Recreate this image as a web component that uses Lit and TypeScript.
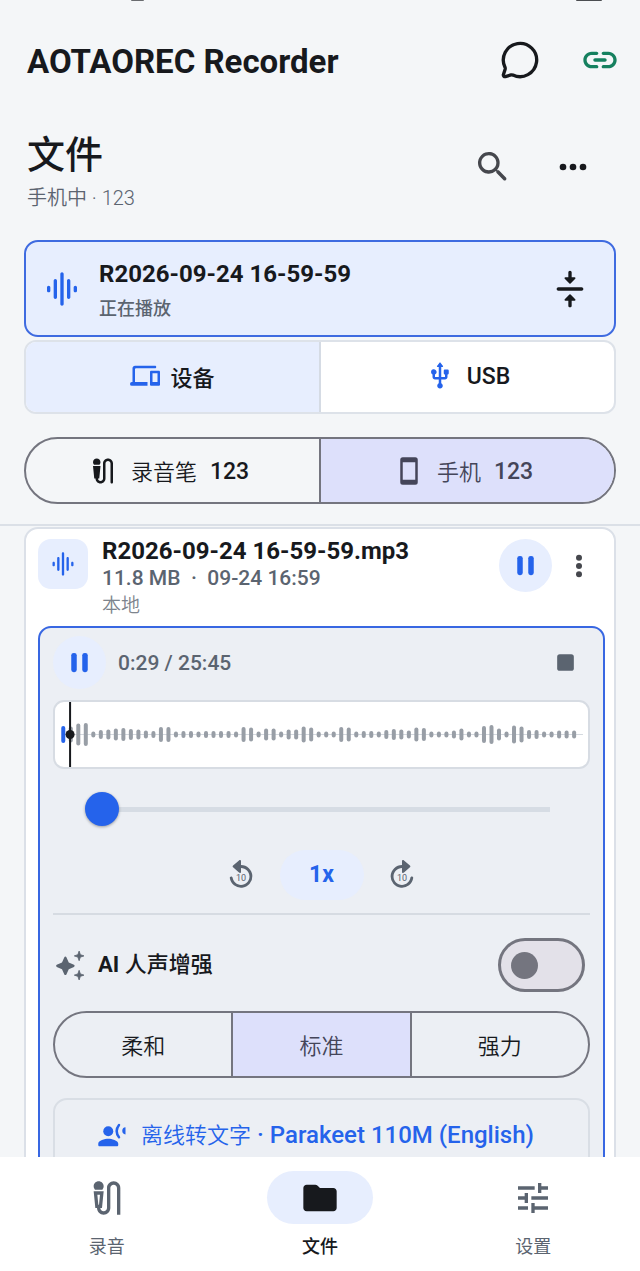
import { LitElement, html, svg, css } from "lit";
import { customElement, property, state } from "lit/decorators.js";

const eq = svg`<path d="M7 18c.55 0 1-.45 1-1V7c0-.55-.45-1-1-1s-1 .45-1 1v10c0 .55.45 1 1 1zm4 4c.55 0 1-.45 1-1V3c0-.55-.45-1-1-1s-1 .45-1 1v18c0 .55.45 1 1 1zm-8-8c.55 0 1-.45 1-1v-2c0-.55-.45-1-1-1s-1 .45-1 1v2c0 .55.45 1 1 1zm12 4c.55 0 1-.45 1-1V7c0-.55-.45-1-1-1s-1 .45-1 1v10c0 .55.45 1 1 1zm3-7v2c0 .55.45 1 1 1s1-.45 1-1v-2c0-.55-.45-1-1-1s-1 .45-1 1z" transform="translate(1 0)"/>`;

const icons: Record<string, unknown> = {
  chat: svg`<path fill="none" stroke="currentColor" stroke-width="2" stroke-linecap="round" stroke-linejoin="round" d="M2.992 16.342a2 2 0 0 1 .094 1.167l-1.065 3.29a1 1 0 0 0 1.236 1.168l3.413-.998a2 2 0 0 1 1.099.092 10 10 0 1 0-4.777-4.719"/>`,
  link: svg`<path d="M17 7h-3c-.55 0-1 .45-1 1s.45 1 1 1h3c1.65 0 3 1.35 3 3s-1.35 3-3 3h-3c-.55 0-1 .45-1 1s.45 1 1 1h3c2.76 0 5-2.24 5-5s-2.24-5-5-5zm-9 5c0 .55.45 1 1 1h6c.55 0 1-.45 1-1s-.45-1-1-1H9c-.55 0-1 .45-1 1zm2 3H7c-1.65 0-3-1.35-3-3s1.35-3 3-3h3c.55 0 1-.45 1-1s-.45-1-1-1H7c-2.76 0-5 2.24-5 5s2.24 5 5 5h3c.55 0 1-.45 1-1s-.45-1-1-1z"/>`,
  search: svg`<path d="M15.5 14h-.79l-.28-.27a6.5 6.5 0 0 0 1.48-5.34c-.47-2.78-2.79-5-5.59-5.34a6.505 6.505 0 0 0-7.27 7.27c.34 2.8 2.56 5.12 5.34 5.59a6.5 6.5 0 0 0 5.34-1.48l.27.28v.79l4.25 4.25c.41.41 1.08.41 1.49 0 .41-.41.41-1.08 0-1.49L15.5 14zm-6 0C7.01 14 5 11.99 5 9.5S7.01 5 9.5 5 14 7.01 14 9.5 11.99 14 9.5 14z"/>`,
  more: svg`<circle cx="6" cy="12" r="2"/><circle cx="12" cy="12" r="2"/><circle cx="18" cy="12" r="2"/>`,
  moreVert: svg`<circle cx="12" cy="7" r="1.800"/><circle cx="12" cy="12" r="1.800"/><circle cx="12" cy="17" r="1.800"/>`,
  eq,
  compress: svg`<path d="M5 11h14c.55 0 1 .45 1 1s-.45 1-1 1H5c-.55 0-1-.45-1-1s.45-1 1-1zM11 2c0-.55.45-1 1-1s1 .45 1 1v3h1.8c.45 0 .67.54.35.85l-2.8 2.8a.5.5 0 0 1-.7 0l-2.8-2.8C8.540 5.54 8.760 5 9.200 5H11V2zM11 22c0 .55.45 1 1 1s1-.45 1-1v-3h1.8c.45 0 .67-.54.35-.85l-2.8-2.8a.5.5 0 0 0-.7 0l-2.800 2.8c-.31.31-.09.85.35.85H11v3z"/>`,
  devices: svg`<path d="M4 6c0-.55.45-1 1-1h15c.55 0 1-.45 1-1s-.45-1-1-1H4c-1.100 0-2 .9-2 2v11h-.5a1.500 1.500 0 0 0 0 3H14v-3H4V6zm19 1h-6c-.55 0-1 .45-1 1v10c0 .55.45 1 1 1h6c.55 0 1-.45 1-1V8c0-.55-.45-1-1-1zm-1 9h-4v-7h4v7z"/>`,
  usb: svg`<path d="M15 7v2c0 .55.45 1 1 1v2h-3V4h1c.41 0 .65-.47.4-.8l-2-2.670a.5.5 0 0 0-.8 0L9.600 3.200c-.25.33-.01.8.4.8h1v8H8v-2.070A2.180 2.180 0 0 0 8.990 7 2.200 2.200 0 0 0 6.400 5.860 2.200 2.200 0 0 0 6 9.930V12c0 1.100.9 2 2 2h3v3.050a2.200 2.200 0 1 0 2 0V14h3c1.100 0 2-.9 2-2v-2c.55 0 1-.45 1-1V7c0-.55-.45-1-1-1h-2c-.55 0-1 .45-1 1z"/>`,
  micCable: svg`<path d="M9.220 7H4.780C4.300 6.470 4 5.770 4 5c0-1.660 1.340-3 3-3s3 1.340 3 3c0 .77-.3 1.470-.78 2zM16 2c-2.210 0-4 1.790-4 4v12c0 1.100-.9 2-2 2s-2-.9-2-2h1l1-10H4l1 10h1c0 2.210 1.790 4 4 4s4-1.790 4-4V6c0-1.100.9-2 2-2s2 .9 2 2v15c0 .55.45 1 1 1s1-.45 1-1V6c0-2.210-1.790-4-4-4z"/>`,
  micCableOutline: svg`<path fill-rule="evenodd" d="M9.220 7H4.780C4.300 6.470 4 5.770 4 5c0-1.660 1.340-3 3-3s3 1.340 3 3c0 .77-.3 1.470-.78 2zM16 2c-2.210 0-4 1.790-4 4v12c0 1.100-.9 2-2 2s-2-.9-2-2h1l1-10H4l1 10h1c0 2.210 1.790 4 4 4s4-1.790 4-4V6c0-1.100.9-2 2-2s2 .9 2 2v16h2V6c0-2.210-1.790-4-4-4zM7.190 16h-.38l-.6-6h1.580z"/>`,
  phone: svg`<path fill-rule="evenodd" d="M7 1h10a2 2 0 0 1 2 2v18a2 2 0 0 1-2 2H7a2 2 0 0 1-2-2V3a2 2 0 0 1 2-2zM7 5v14h10V5z"/>`,
  pause: svg`<rect x="6" y="5" width="4" height="14" rx="1.800"/><rect x="14" y="5" width="4" height="14" rx="1.800"/>`,
  stop: svg`<rect x="4" y="4" width="16" height="16" rx="2.500"/>`,
  replay: svg`<path d="M12 5V2.200c0-.9-.85-1-1.400-.5L6.400 5.300c-.4.400-.4.900 0 1.300l4.200 3.700c.6.500 1.400.3 1.400-.5V7c3.300 0 6 2.700 6 6s-2.700 6-6 6c-2.970 0-5.430-2.160-5.910-5-.09-.58-.5-1-1-1-.6 0-1.080.52-1 1.120A8 8 0 1 0 12 5z"/>`,
  sparkles: svg`<path d="M9 5.500c.3 0 .6.200.75.500l1.700 3.800 3.800 1.700c.65.300.65 1.200 0 1.500l-3.800 1.700-1.700 3.800c-.3.650-1.200.650-1.500 0l-1.700-3.800-3.800-1.700c-.65-.3-.65-1.200 0-1.500l3.800-1.700L8.250 6c.15-.3.450-.5.750-.5z"/><path stroke="currentColor" stroke-width=".6" stroke-linejoin="round" d="M19 1.500l.9 2.600 2.600.9-2.600.9L19 8.500l-.9-2.600-2.600-.9 2.600-.9zM19 15.500l.9 2.600 2.600.9-2.600.9-.9 2.600-.9-2.600-2.600-.9 2.600-.9z"/>`,
  voice: svg`<circle cx="9" cy="9" r="4"/><path d="M9 15c-2.670 0-8 1.340-8 4v1c0 .55.45 1 1 1h14c.55 0 1-.45 1-1v-1c0-2.660-5.330-4-8-4zM22.800 5.700v5.800c-1.700 0-2.600-1.200-2.600-2.900s.9-2.900 2.600-2.900z"/><path fill="none" stroke="currentColor" stroke-width="2" stroke-linecap="round" d="M17.600 4c-2.300 3-2.300 6.800 0 9.800"/>`,
  folder: svg`<path d="M10.590 4.590C10.210 4.210 9.700 4 9.170 4H4c-1.100 0-1.990.9-1.990 2L2 18c0 1.100.9 2 2 2h16c1.100 0 2-.9 2-2V8c0-1.100-.9-2-2-2h-8l-1.410-1.410z"/>`,
  tune: svg`<path d="M3 17v2h6v-2H3zM3 5v2h10V5H3zm10 16v-2h8v-2h-8v-2h-2v6h2zM7 9v2H3v2h4v2h2V9H7zm14 4v-2H11v2h10zm-6-4h2V7h4V5h-4V3h-2v6z"/>`,
};

@customElement("app-icon")
class AppIcon extends LitElement {
  @property() name = "";
  static styles = css`
    :host { display: block; flex: none; width: 40px; height: 40px; }
    .glyph { display: block; width: 100%; height: 100%; fill: currentColor; }
  `;
  render() {
    return html`<svg class="glyph" viewBox="0 0 24 24" aria-hidden="true">${icons[this.name]}</svg>`;
  }
}

@customElement("wave-form")
class WaveForm extends LitElement {
  @property({ type: Number }) played = 1;
  private levels = [
    17, 16, 22, 23, 6, 9, 10, 12, 13, 11, 10, 8, 7, 15, 15, 6, 7, 7, 6, 7, 7, 7, 7, 6, 15, 14, 6, 12, 12, 6, 10, 10,
    16, 14, 6, 6, 6, 15, 14, 6, 7, 7, 6, 9, 11, 10, 8, 14, 13, 6, 6, 6, 8, 12, 6, 6, 17, 19, 12, 6, 18, 16, 9, 9, 6,
    6, 8, 8, 8,
  ];
  static styles = css`
    :host { display: block; box-sizing: border-box; background: #fff; border: 2px solid #d7dce3; border-radius: 11px; }
    .wave { display: block; width: 100%; }
    .base { stroke: #d4d9df; stroke-width: 1; }
    .bar { fill: #989ea6; }
    .bar.on { fill: #2563eb; }
    .head { fill: #17191d; }
  `;
  render() {
    return html`<svg class="wave" viewBox="0 0 532 65" role="img" aria-label="波形">
      <line class="base" x1="8" x2="527" y1="32.500" y2="32.500" />
      ${this.levels.map(
        (h, i) => svg`<rect class=${i < this.played ? "bar on" : "bar"} x=${6.2 + i * 7.5} y=${32.5 - h / 2} width="4" height=${h} rx="2"/>`,
      )}
      <rect class="head" x="14" y="0" width="2" height="65" />
      <circle class="head" cx="15" cy="32.500" r="4.500" />
    </svg>`;
  }
}

@customElement("app-root")
class AppRoot extends LitElement {
  @state() private source = 0;
  @state() private place = 1;
  @state() private strength = 1;

  static styles = css`
    :host {
      display: flex; flex-direction: column; height: 100vh; overflow: hidden;
      background: #f4f6f8; color: #17191d;
      font-family: Roboto, "Noto Sans CJK SC", sans-serif;
      font-size: 23px; line-height: 28px;
    }
    * { box-sizing: border-box; }
    h1, h2, h3, p { margin: 0; }
    button { font: inherit; color: inherit; background: none; border: 0; padding: 0; margin: 0; cursor: pointer; }
    .status { display: flex; justify-content: space-between; height: 2px; padding: 0 38px 0 131px; }
    .status i { height: 1px; width: 13px; background: #6a6c70; border-radius: 0 0 4px 4px; }
    .status i.battery { width: 26px; height: 1px; background: #4b4d51; }

    .topbar { display: flex; align-items: flex-start; padding: 38px 20px 38px 27px; }
    .brand { flex: 1; font-size: 33px; line-height: 44px; font-weight: 700; }
    .icon-btn { display: grid; place-items: center; }
    .topbar .icon-btn { width: 40px; margin-left: 40px; }
    .link { color: #15805f; }

    .heading { display: flex; align-items: flex-start; padding: 8px 27px 28px; }
    .titles { flex: 1; }
    .title { font-size: 38px; line-height: 50px; font-weight: 500; }
    .sub { font-size: 20px; line-height: 28px; color: #5b6470; margin-top: 4px; }
    .heading .icon-btn { width: 40px; margin: 17px 40px 0 0; }
    .heading .icon-btn:last-child { margin-right: 20px; }
    .grey { color: #45474d; }
    .thin, .sub, .local { font-weight: 350; }

    .upper { padding: 0 24px 20px; border-bottom: 2px solid #dbe0e7; }
    .now {
      display: flex; align-items: center; height: 97px; padding: 0 24px 0 16px;
      background: #e7eefe; border: 2px solid #3f6be0; border-radius: 14px;
    }
    .now app-icon { color: #2563eb; }
    .now .icon-btn app-icon { color: #17191d; }
    .now-text { flex: 1; min-width: 0; padding: 5px 0 0 17px; }
    .name { font-weight: 700; font-size: 24px; line-height: 30px; white-space: nowrap; }
    .now-sub { font-size: 18px; line-height: 28px; margin-top: 6px; font-weight: 500; color: #5b6470; }

    .tabs { display: flex; height: 74px; margin-top: 3px; background: #fff; border: 2px solid #dde2e9; border-radius: 12px; overflow: hidden; }
    .tab { flex: 1; display: flex; align-items: center; justify-content: center; gap: 10px; font-weight: 500; }
    .tab + .tab { border-left: 2px solid #d5dbe4; gap: 12px; }
    .tab.on { background: #e7eefe; }
    .tab app-icon { width: 30px; height: 30px; color: #2563eb; }
    .cjk { font-size: 22px; padding-top: 4px; }

    .seg { display: flex; height: 67px; border: 2px solid #74757f; border-radius: 34px; overflow: hidden; }
    .seg.place { margin-top: 23px; }
    .seg button { flex: 1; display: flex; align-items: center; justify-content: center; gap: 13px; }
    .seg.place button { padding-right: 8px; }
    .seg button + button { border-left: 2px solid #74757f; }
    .seg button.on { background: #dde0fb; color: #444559; }
    .seg app-icon { width: 30px; height: 30px; }
    .seg b { font-weight: 500; padding-top: 2px; }

    .list { flex: 1; min-height: 0; overflow-y: auto; scrollbar-width: none; padding: 1px 24px 0; }
    .card { background: #fff; border: 2px solid #dbe0e8; border-radius: 14px; padding: 9px 9px 20px 12px; }
    .file { display: flex; align-items: flex-start; }
    .thumb { display: grid; place-items: center; width: 50px; height: 50px; margin-top: 1px; border-radius: 13px; background: #e7eefe; color: #2563eb; }
    .thumb app-icon { width: 28px; height: 28px; }
    .file-text { flex: 1; min-width: 0; padding-left: 14px; }
    .file-text .name { line-height: 26px; }
    .meta { font-size: 21px; line-height: 28px; font-weight: 500; color: #5b6470; white-space: pre; }
    .local { font-size: 19px; line-height: 28px; color: #7d848d; }
    .round { display: grid; place-items: center; width: 53px; height: 53px; border-radius: 50%; background: #e7eefe; color: #2563eb; }
    .round app-icon { width: 33px; height: 33px; }
    .file .round { margin-top: 1px; }
    .file .more { width: 53px; height: 53px; margin-top: 1px; color: #45474d; }

    .player { margin-top: 6px; padding: 8px 13px 24px; background: #eceff4; border: 2px solid #3867e2; border-radius: 13px; }
    .transport { display: flex; align-items: center; height: 53px; }
    .time { flex: 1; padding-left: 12px; font-size: 21px; font-weight: 500; color: #5b6470; }
    .transport .stop { width: 50px; color: #5b6470; }
    .stop app-icon { width: 25px; height: 25px; }
    wave-form { margin-top: 11px; }
    .seek { display: block; appearance: none; width: calc(100% - 46px); height: 34px; margin: 23px;
      background: linear-gradient(#d6dce4, #d6dce4) center / calc(100% - 34px) 5px no-repeat; }
    .seek::-webkit-slider-thumb { appearance: none; width: 34px; height: 34px; border-radius: 50%; background: #2563eb; box-shadow: 0 1px 3px rgba(0, 0, 0, 0.35); }
    .speed { display: flex; align-items: center; justify-content: center; gap: 17px; height: 52px; }
    .jump { position: relative; display: grid; place-items: center; width: 43px; height: 50px; color: #5b6470; }
    .jump app-icon { width: 34px; height: 34px; }
    .jump.fwd app-icon { transform: scaleX(-1); }
    .jump span { position: absolute; inset: 3px 0 0; font-size: 9px; line-height: 50px; text-align: center; }
    .rate { width: 84px; height: 50px; border-radius: 25px; background: #e7eefe; color: #2563eb; font-weight: 700; }
    .rule { height: 2px; margin: 12px 0 0; border: 0; background: #d6dbe2; }
    .enhance { display: flex; align-items: center; height: 96px; padding: 4px 5px 0 0; }
    .enhance app-icon { width: 33px; height: 33px; color: #5b6470; }
    .enhance label { flex: 1; padding-left: 12px; font-size: 22px; font-weight: 700; }
    .enhance label span { font-weight: 500; }
    .switch { appearance: none; display: flex; align-items: center; width: 87px; height: 54px; margin: 0; padding: 0 10px; border: 3px solid #74757f; border-radius: 27px; background: #e3e1e9; }
    .switch::before { content: ""; width: 27px; height: 27px; border-radius: 50%; background: #74757f; }
    .switch:checked { justify-content: flex-end; background: #dde0fb; }
    .transcribe { display: flex; align-items: center; justify-content: center; gap: 14px; width: 100%; height: 74px; margin-top: 20px; padding-right: 12px; border: 2px solid #d9dee5; border-radius: 14px; color: #2563eb; font-size: 24px; font-weight: 500; }
    .transcribe app-icon { width: 30px; height: 30px; }
    .transcribe .thin { font-size: 22px; }

    .nav { display: flex; background: #fff; height: 114px; padding-top: 14px; }
    .nav a { flex: 1; display: flex; flex-direction: column; align-items: center; gap: 9px; font-size: 18px; color: #5b6470; text-decoration: none; }
    .pill { display: grid; place-items: center; width: 106px; height: 53px; border-radius: 27px; }
    .nav a.on { color: #17191d; font-weight: 500; }
    .nav a.on .pill { background: #e7eefe; }
  `;

  render() {
    const on = (a: number, b: number, base = "") => `${base} ${a === b ? "on" : ""}`;
    return html`
      <div class="status" aria-hidden="true"><i></i><i class="battery"></i></div>
      <header class="topbar">
        <h1 class="brand">AOTAOREC Recorder</h1>
        <button class="icon-btn" aria-label="消息"><app-icon name="chat"></app-icon></button>
        <button class="icon-btn link" aria-label="连接"><app-icon name="link"></app-icon></button>
      </header>
      <div class="heading">
        <div class="titles">
          <h2 class="title">文件</h2>
          <p class="sub">手机中 · 123</p>
        </div>
        <button class="icon-btn grey" aria-label="搜索"><app-icon name="search"></app-icon></button>
        <button class="icon-btn" aria-label="更多"><app-icon name="more"></app-icon></button>
      </div>
      <section class="upper">
        <div class="now">
          <app-icon name="eq"></app-icon>
          <div class="now-text">
            <h3 class="name">R2026-09-24 16-59-59</h3>
            <p class="now-sub">正在播放</p>
          </div>
          <button class="icon-btn" aria-label="收起"><app-icon name="compress"></app-icon></button>
        </div>
        <div class="tabs">
          <button class=${on(this.source, 0, "tab")} aria-pressed=${this.source === 0} @click=${() => (this.source = 0)}>
            <app-icon name="devices"></app-icon><span class="cjk">设备</span>
          </button>
          <button class=${on(this.source, 1, "tab")} aria-pressed=${this.source === 1} @click=${() => (this.source = 1)}>
            <app-icon name="usb"></app-icon>USB
          </button>
        </div>
        <div class="seg place">
          <button class=${on(this.place, 0)} aria-pressed=${this.place === 0} @click=${() => (this.place = 0)}>
            <app-icon name="micCable"></app-icon><span class="cjk thin">录音笔</span><b>123</b>
          </button>
          <button class=${on(this.place, 1)} aria-pressed=${this.place === 1} @click=${() => (this.place = 1)}>
            <app-icon name="phone"></app-icon><span class="cjk thin">手机</span><b>123</b>
          </button>
        </div>
      </section>
      <main class="list">
        <article class="card">
          <div class="file">
            <div class="thumb"><app-icon name="eq"></app-icon></div>
            <div class="file-text">
              <h3 class="name">R2026-09-24 16-59-59.mp3</h3>
              <p class="meta">11.8 MB  ·  09-24 16:59</p>
              <p class="local">本地</p>
            </div>
            <button class="round" aria-label="暂停"><app-icon name="pause"></app-icon></button>
            <button class="icon-btn more" aria-label="更多操作"><app-icon name="moreVert"></app-icon></button>
          </div>
          <div class="player">
            <div class="transport">
              <button class="round" aria-label="暂停播放"><app-icon name="pause"></app-icon></button>
              <span class="time">0:29 / 25:45</span>
              <button class="icon-btn stop" aria-label="停止"><app-icon name="stop"></app-icon></button>
            </div>
            <wave-form played="1"></wave-form>
            <input class="seek" type="range" aria-label="播放进度" min="0" max="1545" value="29" />
            <div class="speed">
              <button class="jump" aria-label="后退 10 秒"><app-icon name="replay"></app-icon><span>10</span></button>
              <button class="rate">1x</button>
              <button class="jump fwd" aria-label="前进 10 秒"><app-icon name="replay"></app-icon><span>10</span></button>
            </div>
            <hr class="rule" />
            <div class="enhance">
              <app-icon name="sparkles"></app-icon>
              <label for="enhance">AI <span>人声增强</span></label>
              <input class="switch" id="enhance" type="checkbox" role="switch" />
            </div>
            <div class="seg">
              ${["柔和", "标准", "强力"].map(
                (t, i) => html`<button class=${on(this.strength, i)} aria-pressed=${this.strength === i} @click=${() => (this.strength = i)}><span class="cjk thin">${t}</span></button>`,
              )}
            </div>
            <button class="transcribe">
              <app-icon name="voice"></app-icon><span><span class="thin">离线转文字</span> · Parakeet 110M (English)</span>
            </button>
          </div>
        </article>
      </main>
      <nav class="nav">
        <a href="#record"><span class="pill"><app-icon name="micCableOutline"></app-icon></span>录音</a>
        <a class="on" href="#files" aria-current="page"><span class="pill"><app-icon name="folder"></app-icon></span>文件</a>
        <a href="#settings"><span class="pill"><app-icon name="tune"></app-icon></span>设置</a>
      </nav>
    `;
  }
}
